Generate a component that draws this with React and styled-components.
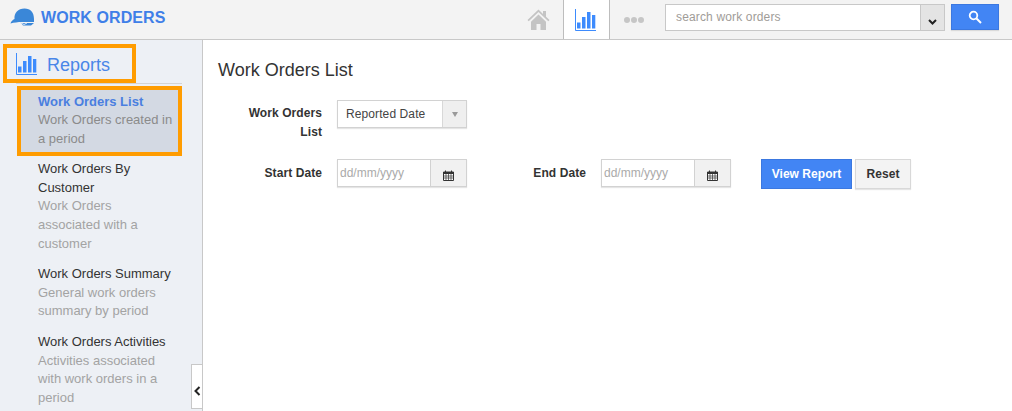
import React from "react";
import styled, { createGlobalStyle } from "styled-components";

const Global = createGlobalStyle`
  html, body { margin: 0; padding: 0; background: #fff; height: 100%; overflow: hidden; }
  * { box-sizing: border-box; }
  body { font-family: "Liberation Sans", Arial, sans-serif; font-size: 13px; line-height: 18.57px; color: #333; }
`;

const Page = styled.div`
  width: 1012px;
  height: 411px;
  display: flex;
  flex-direction: column;
  overflow: hidden;
`;

const Header = styled.header`
  height: 40px;
  flex: none;
  background: #f3f3f3;
  border-bottom: 1px solid #c8c8c8;
  display: flex;
  align-items: stretch;
`;

const Brand = styled.div`
  display: flex;
  align-items: center;
  padding: 0 0 2px 10px;
  gap: 6px;
  color: #3f7fe8;
  font-size: 16px;
  font-weight: 700;
  letter-spacing: 0.08px;
  width: 525px;
`;

const HomeTab = styled.div`
  width: 30px;
  display: flex;
  align-items: center;
  justify-content: center;
  margin-right: 10px;
  margin-left: -2px;
`;

const ChartTab = styled.div`
  width: 47px;
  height: 39px;
  background: #fff;
  border-left: 1px solid #bdbdbd;
  border-right: 1px solid #bdbdbd;
  padding-right: 2px;
  display: flex;
  align-items: center;
  justify-content: center;
`;

const Dots = styled.div`
  width: 49px;
  margin-right: 6px;
  padding-right: 2px;
  display: flex;
  align-items: center;
  justify-content: center;
  gap: 1px;
`;

const Dot = styled.span`
  width: 6px;
  height: 6px;
  border-radius: 50%;
  background: #c6c6c6;
`;

const SearchBox = styled.div`
  width: 280px;
  height: 27px;
  margin-top: 4px;
  display: flex;
  border: 1px solid #c8c8c8;
  background: #fff;
`;

const SearchInput = styled.div`
  flex: 1;
  padding-left: 10px;
  line-height: 25px;
  font-size: 12px;
  color: #a09c98;
  letter-spacing: 0.15px;
`;

const SearchCaret = styled.div`
  width: 24px;
  background: #e4e4e4;
  border-left: 1px solid #c8c8c8;
  display: flex;
  align-items: flex-end;
  justify-content: center;
  padding-bottom: 5px;
`;

const SearchButton = styled.div`
  width: 48px;
  height: 26px;
  margin: 4px 0 0 6px;
  background: #4285f4;
  border: 1px solid #3b78e0;
  box-shadow: 0 1px 1px rgba(0, 0, 0, 0.1);
  display: flex;
  align-items: center;
  justify-content: center;
`;

const Body = styled.div`
  flex: 1;
  display: flex;
  min-height: 0;
`;

const Sidebar = styled.aside`
  width: 203px;
  flex: none;
  background: #edf0f5;
  border-right: 1px solid #c8c8c8;
  padding-top: 4px;
  position: relative;
  overflow: hidden;
`;

const ReportsTitle = styled.div`
  width: 133px;
  height: 39px;
  margin-left: 3px;
  border: 4px solid #ff9c00;
  display: flex;
  align-items: center;
  padding: 1px 0 0 9px;
  gap: 10px;
  font-size: 18px;
  line-height: 22px;
  color: #4a86e8;
`;

const ReportsLabel = styled.span`
  padding-top: 1px;
`;

const Menu = styled.div`
  margin-left: 16px;
  width: 166px;
  border-top: 1px solid #d4d4d4;
  padding-top: 2px;
`;

const Item = styled.div`
  margin-left: 1px;
  padding: ${(p) => (p.$active ? "2.7px 4px 3.3px 17px" : "0 8px 0 21px")};
  margin-bottom: ${(p) => (p.$active ? "4.6px" : "12.1px")};
  border: ${(p) => (p.$active ? "4px solid #ff9c00" : "none")};
  background: ${(p) => (p.$active ? "#d3d9e3" : "transparent")};
`;

const ItemTitle = styled.div`
  color: ${(p) => (p.$active ? "#4a7fe0" : "#333")};
  font-weight: ${(p) => (p.$active ? 700 : 400)};
`;

const ItemText = styled.div`
  color: ${(p) => (p.$active ? "#8b8b8b" : "#a3a3a3")};
`;

const Collapse = styled.div`
  position: absolute;
  right: 0;
  bottom: 2px;
  width: 11px;
  height: 45px;
  background: #fff;
  border: 1px solid #c8c8c8;
  border-right: none;
  display: flex;
  align-items: center;
  justify-content: center;
  padding-top: 8px;
`;

const Main = styled.main`
  flex: 1;
  padding: 17px 0 0 15px;
`;

const Title = styled.h1`
  margin: 0 0 17px;
  font-size: 18px;
  line-height: 26px;
  font-weight: 400;
  color: #333;
`;

const Row = styled.div`
  display: flex;
  align-items: flex-start;
  margin-bottom: ${(p) => p.$gap || 0}px;
`;

const Label = styled.label`
  width: ${(p) => p.$w}px;
  margin-left: ${(p) => p.$ml || 0}px;
  flex: none;
  text-align: right;
  font-weight: 700;
  font-size: 12px;
  padding-top: ${(p) => p.$pt || 0}px;
  margin-right: 15px;
  letter-spacing: 0.08px;
`;

const Select = styled.div`
  width: 130px;
  height: 28px;
  display: flex;
  background: #fff;
  border: 1px solid #d2d2d2;
  box-shadow: 0 1px 1px rgba(0, 0, 0, 0.1);
`;

const SelectValue = styled.div`
  flex: 1;
  padding-left: 8px;
  font-size: 12px;
  line-height: 26px;
  color: #444;
  letter-spacing: 0.1px;
`;

const SelectArrow = styled.div`
  width: 24px;
  background: #efefef;
  border-left: 1px solid #d8d8d8;
  display: flex;
  align-items: center;
  justify-content: center;
  &::after {
    content: "";
    border-left: 3.5px solid transparent;
    border-right: 3.5px solid transparent;
    border-top: 5px solid #9a9a9a;
  }
`;

const DateField = styled.div`
  width: 130px;
  height: 28px;
  display: flex;
  background: #fff;
  border: 1px solid #d2d2d2;
  box-shadow: 0 1px 1px rgba(0, 0, 0, 0.1);
`;

const DateText = styled.div`
  flex: 1;
  padding-left: 2px;
  font-size: 12px;
  line-height: 26px;
  color: #aaa;
`;

const DateButton = styled.div`
  width: 36px;
  background: #f1f1f1;
  border-left: 1px solid #d2d2d2;
  display: flex;
  align-items: center;
  justify-content: center;
  padding-top: 5px;
`;

const PrimaryButton = styled.button`
  width: 91px;
  height: 30px;
  margin-left: 30px;
  background: #4285f4;
  border: 1px solid #3b78e0;
  color: #fff;
  font: 700 12px "Liberation Sans", Arial, sans-serif;
  letter-spacing: 0.05px;
  padding: 0;
`;

const SecondaryButton = styled.button`
  width: 56px;
  height: 30px;
  margin-left: 3px;
  background: #f3f3f3;
  border: 1px solid #d8d8d8;
  box-shadow: 0 1px 1px rgba(0, 0, 0, 0.1);
  color: #333;
  font: 700 12px "Liberation Sans", Arial, sans-serif;
  letter-spacing: 0.05px;
  padding: 0;
`;

const HatIcon = styled.svg`
  margin-bottom: 4px;
  flex: none;
`;

const BarChart = ({ color = "#3d8bfd" }) => (
  <svg width="21" height="22" viewBox="0 0 21 22">
    <path d="M0.5 0v21.5H21" fill="none" stroke={color} strokeWidth="1" />
    <rect x="2" y="13.500" width="3.500" height="6" fill={color} />
    <rect x="7" y="8" width="3.500" height="11.500" fill={color} />
    <rect x="12" y="3" width="3.500" height="16.500" fill={color} />
    <rect x="17" y="6" width="3.300" height="13.500" fill={color} />
  </svg>
);

const Hardhat = () => (
  <HatIcon width="25" height="18" viewBox="0 0 25 18">
    <path d="M4.500 11C4 5 8 0.500 14.500 0.500 20.500 0.500 24 4.500 24 11v3H12c-4 0-8 .5-11.500 1.500C1 13.500 2.500 12 4.500 11z" fill="#3a87d8" />
    <path d="M11 15h13l-3 2.500h-8z" fill="#3a87d8" />
    <path d="M10 14.500l4 2 3-1.500" fill="none" stroke="#dbe7f5" strokeWidth="1" />
  </HatIcon>
);

const Home = () => (
  <svg width="23" height="21" viewBox="0 0 23 21">
    <path d="M11.500 0.500L0.500 11l1.200 1.200L11.500 3l9.800 9.200L22.500 11l-3.500-3.300V2h-3v2.900z" fill="#c4c4c4" />
    <path d="M4 12.800L11.500 5.500 19 12.800V21h-5.500v-6h-4v6H4z" fill="#c4c4c4" />
  </svg>
);

const Chevron = ({ color = "#222" }) => (
  <svg width="9" height="6" viewBox="0 0 9 6">
    <path d="M1 1l3.500 3.500L8 1" fill="none" stroke={color} strokeWidth="2" />
  </svg>
);

const Magnifier = () => (
  <svg width="14" height="14" viewBox="0 0 14 14">
    <circle cx="5.500" cy="5.500" r="3.800" fill="none" stroke="#fff" strokeWidth="1.800" />
    <path d="M8.500 8.500l4.500 4.500" stroke="#fff" strokeWidth="2" />
  </svg>
);

const Calendar = () => (
  <svg width="11" height="11" viewBox="0 0 11 11">
    <path d="M0.500 2h10v8.500h-10z" fill="#fff" stroke="#333" />
    <path d="M0.500 2h10v2h-10z" fill="#333" />
    <path d="M2.500 0.500v2M8.500 0.500v2" stroke="#333" />
    <path d="M0 6h11M0 8h11M3 4v6M5.500 4v6M8 4v6" stroke="#333" strokeWidth="0.700" />
  </svg>
);

const items = [
  { title: "Work Orders By Customer", text: "Work Orders associated with a customer" },
  { title: "Work Orders Summary", text: "General work orders summary by period" },
  { title: "Work Orders Activities", text: "Activities associated with work orders in a period" },
];

export default function App() {
  return (
    <Page>
      <Global />
      <Header>
        <Brand>
          <Hardhat />
          WORK ORDERS
        </Brand>
        <HomeTab><Home /></HomeTab>
        <ChartTab><BarChart /></ChartTab>
        <Dots><Dot /><Dot /><Dot /></Dots>
        <SearchBox>
          <SearchInput>search work orders</SearchInput>
          <SearchCaret><Chevron /></SearchCaret>
        </SearchBox>
        <SearchButton><Magnifier /></SearchButton>
      </Header>
      <Body>
        <Sidebar>
          <ReportsTitle>
            <BarChart />
            <ReportsLabel>Reports</ReportsLabel>
          </ReportsTitle>
          <Menu>
            <Item $active>
              <ItemTitle $active>Work Orders List</ItemTitle>
              <ItemText $active>Work Orders created in a period</ItemText>
            </Item>
            {items.map((item) => (
              <Item key={item.title}>
                <ItemTitle>{item.title}</ItemTitle>
                <ItemText>{item.text}</ItemText>
              </Item>
            ))}
          </Menu>
          <Collapse><svg width="7" height="10" viewBox="0 0 7 10"><path d="M5.500 1L1.500 5l4 4" fill="none" stroke="#222" strokeWidth="2" /></svg></Collapse>
        </Sidebar>
        <Main>
          <Title>Work Orders List</Title>
          <Row $gap={18}>
            <Label $w={85} $ml={19} $pt={4}>Work Orders List</Label>
            <Select>
              <SelectValue>Reported Date</SelectValue>
              <SelectArrow />
            </Select>
          </Row>
          <Row>
            <Label $w={104} $pt={5}>Start Date</Label>
            <DateField>
              <DateText>dd/mm/yyyy</DateText>
              <DateButton><Calendar /></DateButton>
            </DateField>
            <Label $w={104} $ml={15} $pt={5}>End Date</Label>
            <DateField>
              <DateText>dd/mm/yyyy</DateText>
              <DateButton><Calendar /></DateButton>
            </DateField>
            <PrimaryButton>View Report</PrimaryButton>
            <SecondaryButton>Reset</SecondaryButton>
          </Row>
        </Main>
      </Body>
    </Page>
  );
}
